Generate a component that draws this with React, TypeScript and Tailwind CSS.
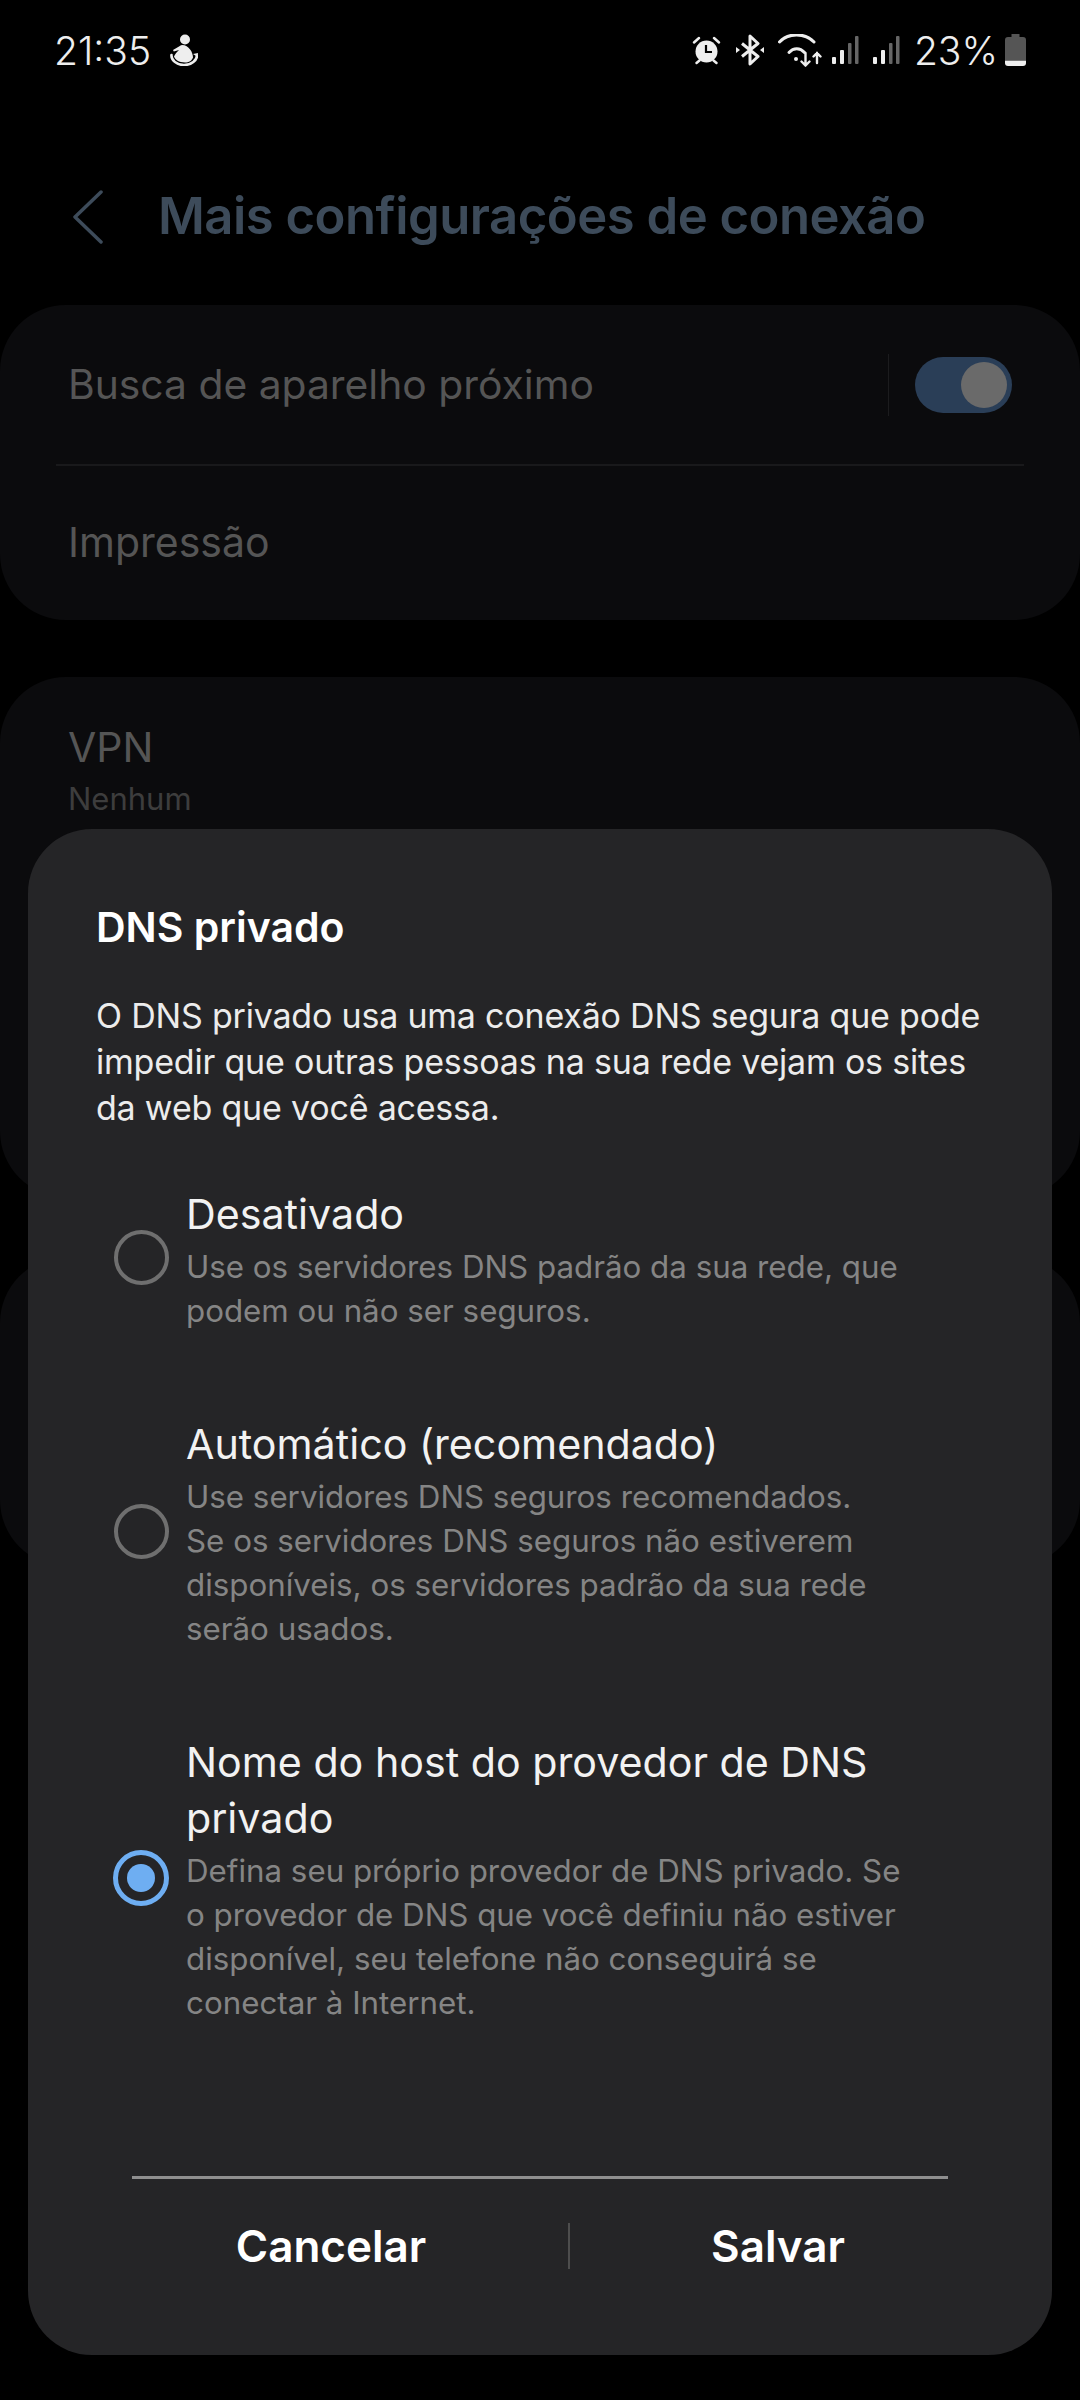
const font = { fontFamily: 'Inter, sans-serif' };

function Bars() {
  return (
    <svg width="27" height="28" viewBox="0 0 27 28">
      <rect x="0" y="21" width="4" height="7" rx="1" fill="#eee" />
      <rect x="8" y="14" width="4" height="14" rx="1" fill="#eee" />
      <rect x="16" y="7" width="3.5" height="21" rx="1" fill="#666" />
      <rect x="23" y="0" width="3.5" height="28" rx="1" fill="#666" />
    </svg>
  );
}

function StatusBar() {
  return (
    <div className="flex items-center justify-between h-[100px] pl-[54px] pr-[54px] text-[#eee]">
      <div className="flex items-center gap-[19px]">
        <span className="text-[39px] leading-none font-light">21:35</span>
        <svg width="28" height="32" viewBox="0 0 28 32" fill="#eee">
          <circle cx="15" cy="5.5" r="5" />
          <path d="M12 11c-1 0-2 .5-3 1.500L3 16l.8 1.400L9 16c-2 2-4 4-5 6.500 1 3 5 6 11 6 4 0 7-2 8-5 0-5-4-12.500-11-12.500z" />
          <path d="M1.500 21c-.5 5 5 10 12.500 10s13-5 13-9.500" fill="none" stroke="#eee" strokeWidth="2.600" strokeLinecap="round" />
          <path d="M23 20l4.500 3 .5-4z" />
        </svg>
      </div>
      <div className="flex items-center">
        <svg width="29" height="29" viewBox="0 0 29 29" fill="#eee">
          <circle cx="14.500" cy="15.500" r="11" />
          <path d="M14 9v7h6" fill="none" stroke="#000" strokeWidth="2.200" />
          <path d="M2 6.500L7 2M27 6.500L22 2M4.500 27l3-2.500M24.500 27l-3-2.500" stroke="#eee" strokeWidth="2.500" strokeLinecap="round" />
        </svg>
        <svg className="ml-[15px]" width="28" height="32" viewBox="0 0 28 32" fill="none" stroke="#eee" strokeWidth="3" strokeLinejoin="round">
          <path d="M6 9.500L22 22.500 14 30V2l8 7.500L6 22.500" />
          <path d="M0 13l4 3-4 3zM28 13l-4 3 4 3z" fill="#eee" stroke="none" />
        </svg>
        <svg className="ml-[14px]" width="44" height="33" viewBox="0 0 44 33" fill="none" stroke="#eee" strokeWidth="3" strokeLinecap="round">
          <path d="M1.500 8C10-1.500 27-1.500 36 8" />
          <path d="M11 18.500c4.500-5 11-5 15.500 0" />
          <circle cx="18" cy="25" r="2" fill="#eee" stroke="none" />
          <path d="M27.500 19v12.500M23.500 27.500l4 4 4-4M39 29V19M35.500 22.500L39 19l3.500 3.500" strokeWidth="2.400" />
        </svg>
        <div className="ml-[10px] flex"><Bars /></div>
        <div className="ml-[14px] flex"><Bars /></div>
        <span className="ml-[14px] text-[39px] leading-none font-light">23%</span>
        <svg className="ml-[7px]" width="21" height="32" viewBox="0 0 21 32">
          <path d="M6.500 0h8v3h3.500a3 3 0 013 3v20H0V6a3 3 0 013-3h3.500z" fill="#555" />
          <path d="M0 26.500h21V29a3 3 0 01-3 3H3a3 3 0 01-3-3z" fill="#eee" />
        </svg>
      </div>
    </div>
  );
}

function Background() {
  return (
    <div className="absolute inset-0">
      <StatusBar />
      <div className="flex items-center h-[117px] mt-[58px]">
        <svg className="ml-[73px]" width="30" height="54" viewBox="0 0 30 54" fill="none" stroke="#3d4b5a" strokeWidth="3.500" strokeLinecap="round" strokeLinejoin="round">
          <path d="M28 2L2 27l26 25" />
        </svg>
        <span className="ml-[55px] text-[50.8px] font-semibold text-[#3d4b5a] tracking-[-0.5px]">Mais configurações de conexão</span>
      </div>
      <div className="mt-[30px] h-[315px] rounded-[66px] bg-[#0b0b0d] px-[68px]">
        <div className="flex items-center h-[159px] text-[40.8px] text-[#555]">
          <span className="flex-1">Busca de aparelho próximo</span>
          <div className="w-px h-[62px] bg-[#1c1c1e] mr-[26px]" />
          <div className="relative w-[97px] h-[56px] rounded-full bg-[#2a3e57]">
            <div className="absolute right-[5px] top-[5px] w-[46px] h-[46px] rounded-full bg-[#6a6a6a]" />
          </div>
        </div>
        <div className="h-[2px] mx-[-12px] bg-[#19191b]" />
        <div className="flex items-center h-[154px] text-[41px] text-[#555]">Impressão</div>
      </div>
      <div className="mt-[57px] h-[520px] rounded-[66px] bg-[#0b0b0d] px-[68px] pt-[44px]">
        <div className="text-[41px] leading-[52px] text-[#555]">VPN</div>
        <div className="mt-[4px] text-[31px] leading-[44px] text-[#3d3d3d]">Nenhum</div>
      </div>
      <div className="mt-[60px] h-[309px] rounded-[66px] bg-[#0b0b0d]" />
    </div>
  );
}

function Option({ title, desc, selected }: { title: string; desc: string; selected?: boolean }) {
  return (
    <div className="flex items-center">
      <div className="w-[158px] shrink-0 flex justify-center pl-[68px] mb-[4px]">
        {selected ? (
          <div className="w-[56px] h-[56px] rounded-full border-[5px] border-[#6eaef2] flex items-center justify-center">
            <div className="w-[28px] h-[28px] rounded-full bg-[#6eaef2]" />
          </div>
        ) : (
          <div className="w-[55px] h-[55px] rounded-full border-[4px] border-[#6f6f6f]" />
        )}
      </div>
      <div className="flex-1">
        <div className="text-[41.2px] leading-[56px] text-[#f2f2f2] whitespace-pre-line">{title}</div>
        <div className="mt-[3px] text-[31.3px] leading-[44px] text-[#858585] whitespace-pre-line">{desc}</div>
      </div>
    </div>
  );
}

export default function App() {
  return (
    <div className="relative w-[1080px] h-[2400px] bg-black overflow-hidden" style={font}>
      <Background />
      <div className="absolute left-[28px] top-[829px] w-[1024px] h-[1526px] rounded-[64px] bg-[#252527] flex flex-col">
        <div className="px-[68px] pt-[70px]">
          <div className="text-[41px] leading-[56px] font-semibold text-white">DNS privado</div>
          <p className="mt-[38px] text-[34px] leading-[46px] tracking-[-0.2px] text-[#ececec]">
            O DNS privado usa uma conexão DNS segura que pode impedir que outras pessoas na sua rede vejam os sites da web que você acessa.
          </p>
        </div>
        <div className="mt-[55px] flex flex-col gap-[83px]">
          <Option title="Desativado" desc={'Use os servidores DNS padrão da sua rede, que\npodem ou não ser seguros.'} />
          <Option
            title="Automático (recomendado)"
            desc={'Use servidores DNS seguros recomendados.\nSe os servidores DNS seguros não estiverem\ndisponíveis, os servidores padrão da sua rede\nserão usados.'}
          />
          <Option
            selected
            title={'Nome do host do provedor de DNS\nprivado'}
            desc={'Defina seu próprio provedor de DNS privado. Se\no provedor de DNS que você definiu não estiver\ndisponível, seu telefone não conseguirá se\nconectar à Internet.'}
          />
        </div>
        <div className="mt-auto mx-[104px] h-[3px] bg-[#8f8f8f]" />
        <div className="flex items-center h-[134px] mb-[42px]">
          <div className="w-[540px] pl-[66px] text-center text-[44px] font-semibold text-white">Cancelar</div>
          <div className="w-[2px] h-[46px] bg-[#4d4d4d]" />
          <div className="flex-1 pr-[66px] text-center text-[44px] font-semibold text-white">Salvar</div>
        </div>
      </div>
    </div>
  );
}
